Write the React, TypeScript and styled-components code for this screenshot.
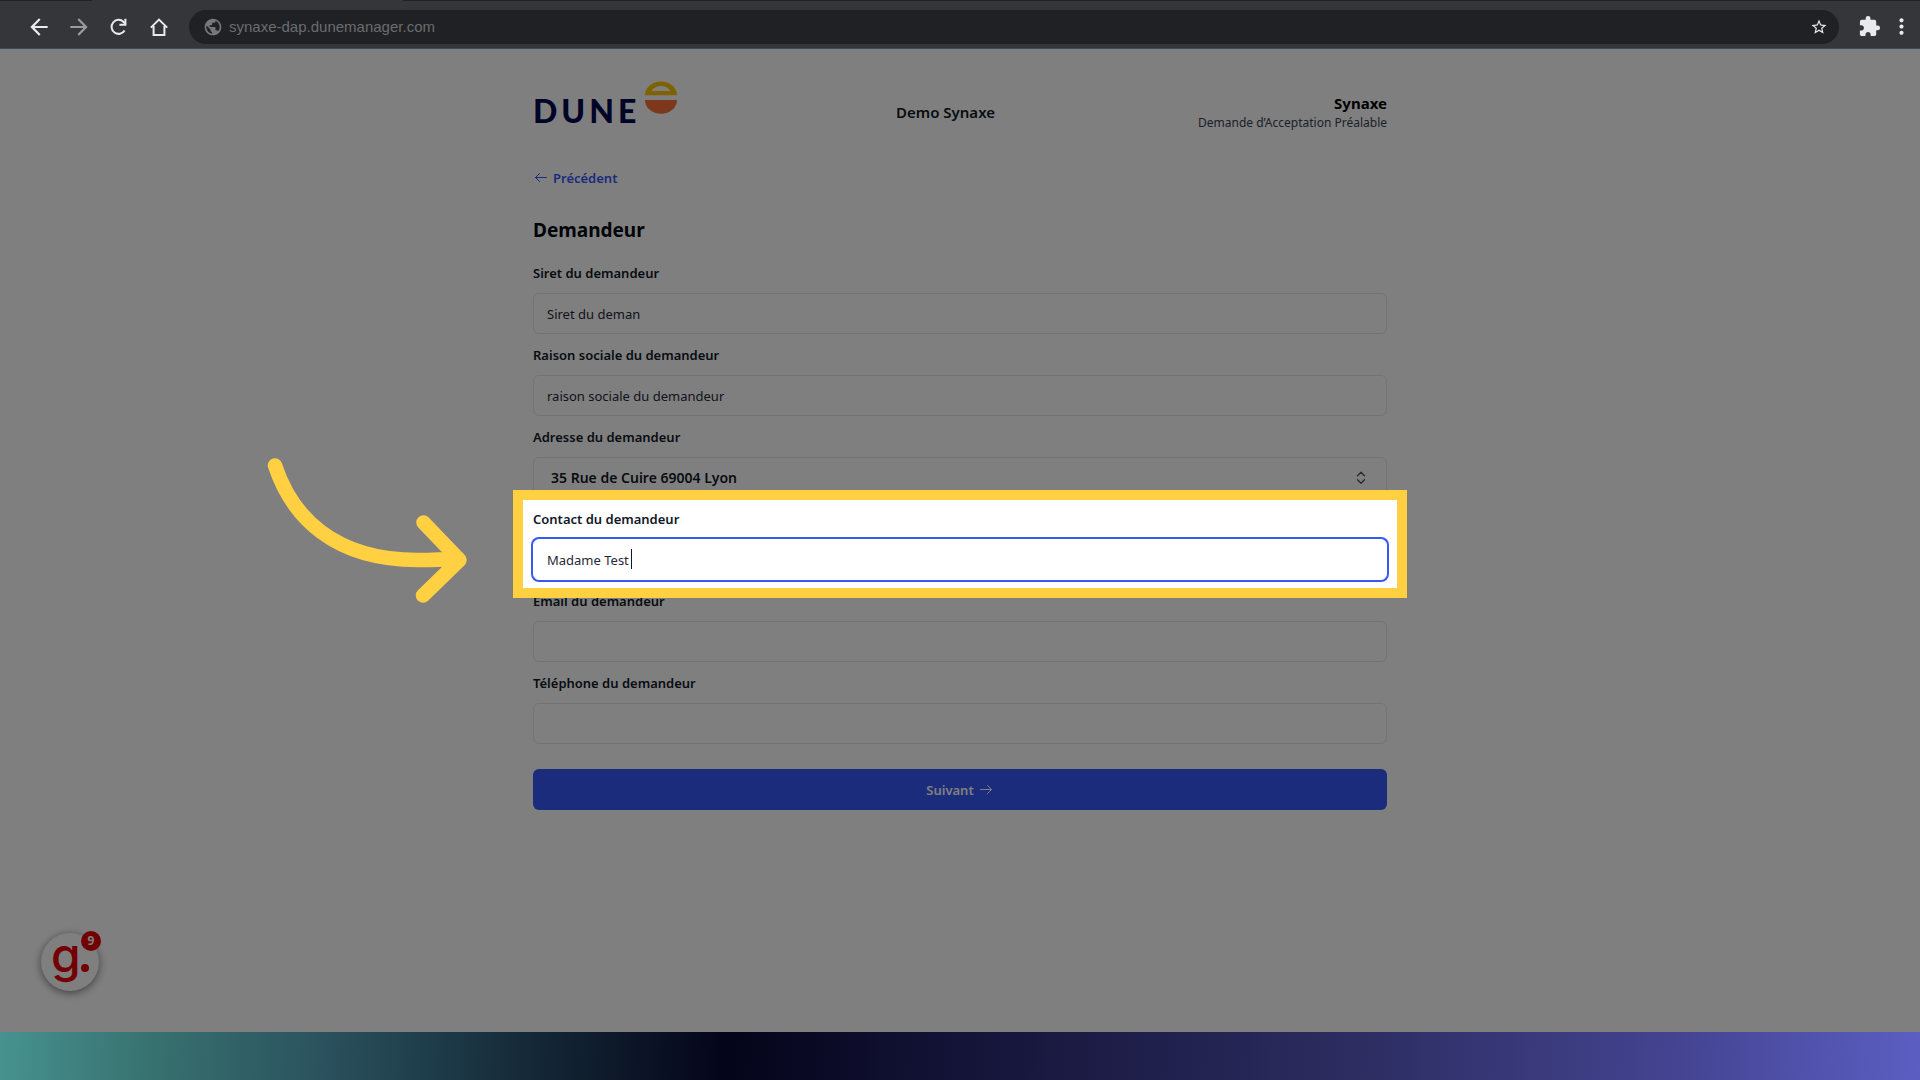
import React from "react";
import styled, { createGlobalStyle, css } from "styled-components";
import {
  MdArrowBack,
  MdArrowForward,
  MdExtension,
  MdMoreVert,
  MdPublic,
  MdStarBorder,
} from "react-icons/md";

const primary = "#3758f9";
const highlight = "#ffd042";

const GlobalStyle = createGlobalStyle`
  *, *::before, *::after { box-sizing: border-box; }
  body {
    margin: 0;
    font-family: "Noto Sans", "Open Sans", sans-serif;
    font-size: 13px;
    color: #111827;
    background: #04041a;
  }
  button, input, select { font: inherit; color: inherit; }
`;

const Screen = styled.div`
  display: flex;
  flex-direction: column;
  min-height: 100vh;
`;

/* Browser toolbar; the gradient is the lower edge of the tab strip. */

const Toolbar = styled.header`
  display: flex;
  align-items: center;
  gap: 17px;
  height: 49px;
  padding: 5px 6px 0 26px;
  background:
    linear-gradient(90deg, #202124 92px, #35363a 92px 403px, #202124 403px) top / 100% 1px no-repeat,
    #35363a;
  border-bottom: 1px solid #3d4a57;
`;

const ToolButton = styled.button<{ $muted?: boolean }>`
  display: flex;
  align-items: center;
  justify-content: center;
  width: 26px;
  height: 26px;
  padding: 0;
  border: 0;
  background: none;
  color: ${(p) => (p.$muted ? "#9a9b9e" : "#e8eaed")};
`;

const NavGroup = styled.nav`
  display: flex;
  gap: 14px;
`;

const ActionGroup = styled.div`
  display: flex;
  gap: 6px;
`;

const AddressBar = styled.div`
  display: flex;
  align-items: center;
  flex: 1;
  gap: 6px;
  height: 34px;
  padding: 0 7px 0 14px;
  border-radius: 17px;
  background: #202124;
  color: #77787b;
`;

const AddressInput = styled.input`
  flex: 1;
  min-width: 0;
  padding: 0;
  border: 0;
  outline: 0;
  background: none;
  font-family: "Liberation Sans", Arial, sans-serif;
  font-size: 15px;
  color: #6b6c6f;
`;

/* Page */

const Page = styled.main`
  position: relative;
  flex: 1;
  padding: 32px 24px;
  overflow: hidden;
  background: #fff;
`;

const Column = styled.div`
  display: flex;
  flex-direction: column;
  max-width: 854px;
  margin: 0 auto;
`;

const PageHeader = styled.div`
  display: flex;
  align-items: center;
  justify-content: space-between;
  height: 62px;
`;

const Logo = styled.div`
  display: flex;
  align-self: start;
  align-items: flex-start;
  gap: 5px;
  width: 160px;
`;

const Wordmark = styled.span`
  padding-top: 14px;
  font-family: Lato, sans-serif;
  font-size: 32px;
  font-weight: 900;
  line-height: 32px;
  letter-spacing: 4px;
  color: #000a50;
`;

const ClientName = styled.div`
  font-size: 15px;
  font-weight: 600;
  line-height: 22px;
`;

const Brand = styled.div`
  text-align: right;
`;

const BrandName = styled.div`
  font-size: 15px;
  font-weight: 700;
  line-height: 22px;
  color: #000;
`;

const BrandCaption = styled.div`
  font-size: 12px;
  line-height: 18px;
  color: #374151;
`;

const BackLink = styled.a`
  display: flex;
  align-items: center;
  align-self: flex-start;
  gap: 4px;
  margin-top: 25px;
  font-weight: 600;
  line-height: 20px;
  color: ${primary};
  text-decoration: none;
`;

const Title = styled.h1`
  margin: 28px 0 19px;
  font-size: 19px;
  font-weight: 700;
  line-height: 28px;
  color: #030712;
`;

const Form = styled.form`
  display: flex;
  flex-direction: column;
  gap: 11px;
`;

const Field = styled.div`
  position: relative;
  display: flex;
  flex-direction: column;
  gap: 9px;
`;

const Label = styled.label`
  font-weight: 600;
  line-height: 21px;
`;

const Control = styled.div`
  position: relative;
  display: grid;
`;

const boxStyle = css`
  width: 100%;
  height: 41px;
  border: 1px solid #e5e7eb;
  border-radius: 6px;
  outline: 0;
  background: #fff;
`;

const TextInput = styled.input<{ $active?: boolean }>`
  ${boxStyle}
  padding: 0 13px;
  color: #1f2937;
  ${(p) => p.$active && `border-color: #fff; box-shadow: 0 0 0 2px ${primary};`}
`;

const Select = styled.select`
  ${boxStyle}
  padding: 0 40px 0 17px;
  appearance: none;
  font-size: 14px;
  font-weight: 600;
`;

const SelectIcon = styled.svg`
  position: absolute;
  top: 13px;
  right: 18px;
  pointer-events: none;
`;

const Caret = styled.span`
  position: absolute;
  top: 10px;
  left: 98px;
  width: 1px;
  height: 20px;
  background: #111827;
`;

const SubmitButton = styled.button`
  display: flex;
  align-items: center;
  justify-content: center;
  gap: 4px;
  height: 41px;
  margin-top: 14px;
  border: 0;
  border-radius: 6px;
  background: ${primary};
  font-weight: 600;
  color: #fff;
`;

/* The spread shadow dims everything on the page outside the frame. */
const Spotlight = styled.div`
  position: absolute;
  z-index: 5;
  inset: -19px -20px -18px;
  border: 10px solid ${highlight};
  box-shadow: 0 0 0 4000px rgba(0, 0, 0, 0.5);
  pointer-events: none;
`;

const Pointer = styled.svg`
  position: absolute;
  top: -50px;
  left: -263px;
`;

const HelpButton = styled.button`
  position: absolute;
  left: 41px;
  bottom: 41px;
  display: flex;
  align-items: flex-start;
  width: 58px;
  height: 58px;
  padding: 0 0 0 10px;
  border: 0;
  border-radius: 50%;
  background: #fff;
  box-shadow: 0 2px 8px rgba(0, 0, 0, 0.5);
  font-family: Inter, sans-serif;
  font-size: 48px;
  font-weight: 500;
  line-height: 44px;
  color: #e60008;
`;

const HelpDot = styled.span`
  width: 8px;
  height: 8px;
  margin-top: 31px;
  border-radius: 50%;
  background: #e60008;
`;

const HelpBadge = styled.span`
  position: absolute;
  top: -2px;
  right: -2px;
  width: 20px;
  height: 20px;
  border-radius: 50%;
  background: #e00008;
  font-family: "Noto Sans", sans-serif;
  font-size: 12px;
  font-weight: 700;
  line-height: 20px;
  text-align: center;
  color: #fff;
`;

const Backdrop = styled.footer`
  height: 48px;
  background: linear-gradient(
    92deg,
    #469290 0%,
    #37716f 8%,
    #2c5560 16%,
    #1d3a48 23%,
    #0f1c2c 31%,
    #04041a 38%,
    #15153a 51%,
    #2c2c60 70%,
    #434390 87%,
    #5c5ec2 100%
  );
`;

const ReloadIcon = () => (
  <svg width="20" height="20" viewBox="0 0 20 20" fill="none" stroke="currentColor" strokeWidth="2">
    <path d="M15.6 13.4A7 7 0 1 1 14.6 5L16.6 7" />
    <path d="M16.4 1.8v6h-6" />
  </svg>
);

const HomeIcon = () => (
  <svg width="20" height="20" viewBox="0 0 20 20" fill="none" stroke="currentColor" strokeWidth="2">
    <path d="M1.8 10.6 10 2.6l8.2 8M4.6 9v9h10.8V9" />
  </svg>
);

const SunMark = () => (
  <svg width="32" height="33" viewBox="0 0 32 33">
    <path
      fill="#ffc400"
      fillRule="evenodd"
      d="M0 14.3A16 13.9 0 0 1 32 14.3ZM6.5 10H25.5Q22 5 16 5T6.5 10Z"
    />
    <path fill="#f9703a" d="M0 19H32A16 13.8 0 0 1 0 19Z" />
  </svg>
);

const ThinArrow = ({ back }: { back?: boolean }) => (
  <svg width="16" height="16" viewBox="0 0 16 16" fill="none" stroke="currentColor" strokeWidth="1" strokeLinecap="round" strokeLinejoin="round">
    <path d={back ? "M13.5 7.5H2.5M6.5 3.5l-4 4 4 4" : "M2.5 7.5h11M9.5 3.5l4 4-4 4"} />
  </svg>
);

interface FieldData {
  id: string;
  label: string;
  value: string;
  kind?: "select" | "active";
}

const fields: FieldData[] = [
  { id: "siret", label: "Siret du demandeur", value: "Siret du deman" },
  { id: "raison", label: "Raison sociale du demandeur", value: "raison sociale du demandeur" },
  { id: "adresse", label: "Adresse du demandeur", value: "35 Rue de Cuire 69004 Lyon", kind: "select" },
  { id: "contact", label: "Contact du demandeur", value: "Madame Test", kind: "active" },
  { id: "email", label: "Email du demandeur", value: "" },
  { id: "telephone", label: "Téléphone du demandeur", value: "" },
];

const FormField = ({ id, label, value, kind }: FieldData) => (
  <Field>
    <Label htmlFor={id}>{label}</Label>
    <Control>
      {kind === "select" ? (
        <>
          <Select id={id} defaultValue={value}>
            <option value={value}>{value}</option>
          </Select>
          <SelectIcon width="16" height="16" viewBox="0 0 16 16" fill="none" stroke="#4b5563" strokeWidth="1.4" strokeLinecap="round" strokeLinejoin="round">
            <path d="M4.5 5.7 8 2.2l3.5 3.5M4.5 9.8 8 13.3l3.5-3.5" />
          </SelectIcon>
        </>
      ) : (
        <TextInput id={id} type="text" defaultValue={value} $active={kind === "active"} />
      )}
      {kind === "active" && <Caret />}
    </Control>
    {kind === "active" && (
      <Spotlight>
        <Pointer width="215" height="160" viewBox="260 450 215 160" fill="none" stroke={highlight} strokeWidth="14.5" strokeLinecap="round" strokeLinejoin="round">
          <path d="M275 465.5C292 517 334 560 417 560Q440 560 458 558.5" />
          <path d="M423.5 522.5 459.5 560 423 595.5" />
        </Pointer>
      </Spotlight>
    )}
  </Field>
);

export default function App() {
  return (
    <Screen>
      <GlobalStyle />
      <Toolbar>
        <NavGroup>
          <ToolButton aria-label="Back"><MdArrowBack size={26} /></ToolButton>
          <ToolButton aria-label="Forward" $muted><MdArrowForward size={26} /></ToolButton>
          <ToolButton aria-label="Reload"><ReloadIcon /></ToolButton>
          <ToolButton aria-label="Home"><HomeIcon /></ToolButton>
        </NavGroup>
        <AddressBar>
          <MdPublic size={20} />
          <AddressInput aria-label="Address" defaultValue="synaxe-dap.dunemanager.com" />
          <ToolButton aria-label="Bookmark"><MdStarBorder size={18} /></ToolButton>
        </AddressBar>
        <ActionGroup>
          <ToolButton aria-label="Extensions"><MdExtension size={23} /></ToolButton>
          <ToolButton aria-label="Menu"><MdMoreVert size={25} /></ToolButton>
        </ActionGroup>
      </Toolbar>
      <Page>
        <Column>
          <PageHeader>
            <Logo>
              <Wordmark>DUNE</Wordmark>
              <SunMark />
            </Logo>
            <ClientName>Demo Synaxe</ClientName>
            <Brand>
              <BrandName>Synaxe</BrandName>
              <BrandCaption>Demande d’Acceptation Préalable</BrandCaption>
            </Brand>
          </PageHeader>
          <BackLink href="#">
            <ThinArrow back />
            Précédent
          </BackLink>
          <Title>Demandeur</Title>
          <Form>
            {fields.map((field) => (
              <FormField key={field.id} {...field} />
            ))}
            <SubmitButton type="button">
              Suivant
              <ThinArrow />
            </SubmitButton>
          </Form>
        </Column>
        <HelpButton aria-label="Help">
          g
          <HelpDot />
          <HelpBadge>9</HelpBadge>
        </HelpButton>
      </Page>
      <Backdrop />
    </Screen>
  );
}
